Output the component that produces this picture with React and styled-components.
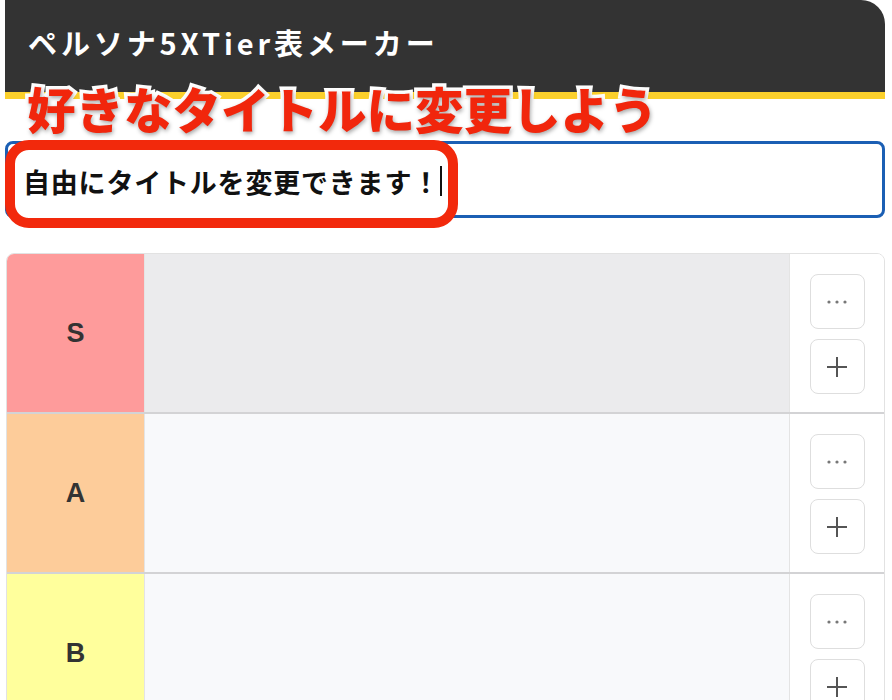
import React from "react";
import styled, { createGlobalStyle } from "styled-components";

const GlobalStyle = createGlobalStyle`
  body {
    margin: 0;
    background: #fff;
    font-family: "Noto Sans CJK JP", "Liberation Sans", sans-serif;
  }
`;

const Page = styled.div`
  position: relative;
  width: 892px;
  height: 700px;
  overflow: hidden;
`;

const Header = styled.header`
  margin: 0 7px 0 5px;
  height: 99px;
  background: #333333;
  border-top-right-radius: 24px;
  border-bottom: 7px solid #fbd02c;
  display: flex;
  align-items: center;
  padding-left: 23px;
  box-sizing: border-box;
  h1 {
    margin: -8px 0 0;
    color: #fff;
    font-size: 29px;
    font-weight: 700;
    letter-spacing: 3.9px;
    font-family: "Noto Sans CJK JP", "Liberation Sans", sans-serif;
  }
`;

const Callout = styled.div`
  position: absolute;
  left: 27px;
  top: 73px;
  font-size: 48.5px;
  font-weight: 900;
  color: #f1260c;
  -webkit-text-stroke: 7px #fff;
  paint-order: stroke fill;
  text-shadow: 1px 2px 4px rgba(0, 0, 0, 0.35);
  white-space: nowrap;
`;

const TitleArea = styled.div`
  position: relative;
  margin: 42px 7px 0 5px;
`;

const TitleInput = styled.div`
  height: 77px;
  border: 3px solid #1b5fb4;
  border-radius: 8px;
  box-sizing: border-box;
`;

const Highlight = styled.div`
  position: absolute;
  left: 0;
  top: -1px;
  width: 453px;
  height: 88px;
  box-sizing: border-box;
  border: 10px solid #f2290c;
  border-radius: 24px;
  background: #fff;
  display: flex;
  align-items: center;
  padding-left: 8px;
  padding-bottom: 6px;
  font-size: 27px;
  font-weight: 700;
  letter-spacing: 0.8px;
  color: #111;
  white-space: nowrap;
  &::after {
    content: "";
    width: 2px;
    height: 30px;
    background: #111;
    margin-left: 0;
  }
`;

const Table = styled.div`
  margin: 35px 7px 0 6px;
  border: 1px solid #e2e2e2;
  border-radius: 8px;
  overflow: hidden;
`;

const Row = styled.div`
  display: flex;
  height: 158px;
  & + & {
    border-top: 2px solid #d3d3d5;
  }
`;

const Label = styled.div`
  width: 137px;
  flex-shrink: 0;
  background: ${(p) => p.$color};
  display: flex;
  align-items: center;
  justify-content: center;
  font-family: "Liberation Sans", sans-serif;
  font-size: 27px;
  font-weight: 700;
  color: #333;
  border-right: 1px solid #e4e4e4;
`;

const Items = styled.div`
  flex: 1;
  background: ${(p) => (p.$active ? "#ebebed" : "#f8f9fb")};
`;

const Actions = styled.div`
  width: 94px;
  flex-shrink: 0;
  border-left: 1px solid #e4e4e4;
  display: flex;
  flex-direction: column;
  align-items: center;
  padding-top: 20px;
  gap: 10px;
  background: #fff;
`;

const IconButton = styled.button`
  width: 55px;
  height: 55px;
  border: 1px solid #dedede;
  border-radius: 8px;
  background: #fff;
  display: flex;
  align-items: center;
  justify-content: center;
  padding: 0;
`;

const Dots = () => (
  <svg width="24" height="6" viewBox="0 0 24 6">
    <circle cx="4" cy="3" r="1.6" fill="#777" />
    <circle cx="12" cy="3" r="1.6" fill="#777" />
    <circle cx="20" cy="3" r="1.6" fill="#777" />
  </svg>
);

const Plus = () => (
  <svg width="22" height="22" viewBox="0 0 22 22">
    <path d="M11 1v20M1 11h20" stroke="#555" strokeWidth="2" />
  </svg>
);

const tiers = [
  { name: "S", color: "#fe9b9b", active: true },
  { name: "A", color: "#fdcc9a" },
  { name: "B", color: "#ffff9c" },
];

export default function App() {
  return (
    <Page>
      <GlobalStyle />
      <Header>
        <h1>ペルソナ5XTier表メーカー</h1>
      </Header>
      <Callout>好きなタイトルに変更しよう</Callout>
      <TitleArea>
        <TitleInput />
        <Highlight>自由にタイトルを変更できます！</Highlight>
      </TitleArea>
      <Table>
        {tiers.map((t) => (
          <Row key={t.name}>
            <Label $color={t.color}>{t.name}</Label>
            <Items $active={t.active} />
            <Actions>
              <IconButton>
                <Dots />
              </IconButton>
              <IconButton>
                <Plus />
              </IconButton>
            </Actions>
          </Row>
        ))}
      </Table>
    </Page>
  );
}
